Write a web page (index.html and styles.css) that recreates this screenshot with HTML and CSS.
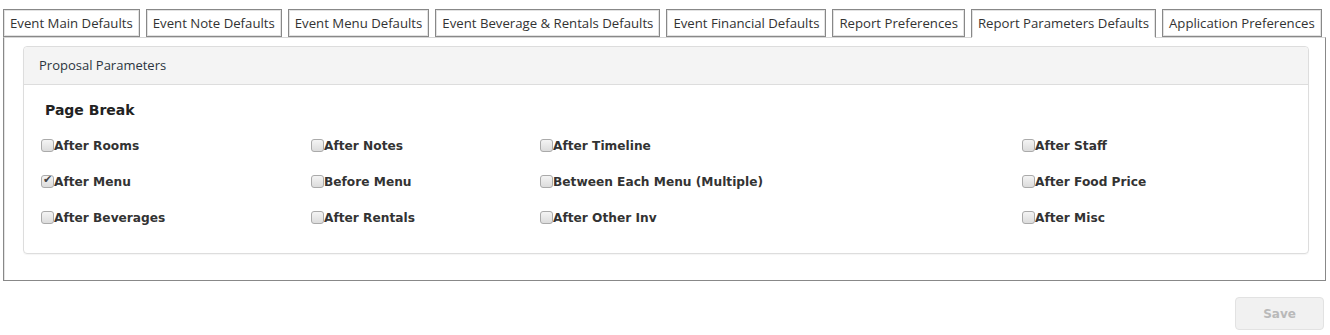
FILE: index.html
```html
<!DOCTYPE html>
<html lang="en">
<head>
    <meta charset="UTF-8">
    <title>Report Parameters Defaults</title>
    <link rel="stylesheet" href="styles.css">
</head>
<body>
    <div class="page">
        <ul class="tabs">
            <li class="tab">Event Main Defaults</li>
            <li class="tab">Event Note Defaults</li>
            <li class="tab">Event Menu Defaults</li>
            <li class="tab">Event Beverage &amp; Rentals Defaults</li>
            <li class="tab">Event Financial Defaults</li>
            <li class="tab">Report Preferences</li>
            <li class="tab active">Report Parameters Defaults</li>
            <li class="tab">Application Preferences</li>
        </ul>
        <div class="tab-panel">
            <div class="card">
                <div class="card-header">Proposal Parameters</div>
                <div class="card-body">
                    <h3 class="section-title">Page Break</h3>
                    <div class="options">
                        <label class="option"><input type="checkbox">After Rooms</label>
                        <label class="option"><input type="checkbox">After Notes</label>
                        <label class="option"><input type="checkbox">After Timeline</label>
                        <label class="option"><input type="checkbox">After Staff</label>

                        <label class="option"><input type="checkbox" checked>After Menu</label>
                        <label class="option"><input type="checkbox">Before Menu</label>
                        <label class="option"><input type="checkbox">Between Each Menu (Multiple)</label>
                        <label class="option"><input type="checkbox">After Food Price</label>

                        <label class="option"><input type="checkbox">After Beverages</label>
                        <label class="option"><input type="checkbox">After Rentals</label>
                        <label class="option"><input type="checkbox">After Other Inv</label>
                        <label class="option"><input type="checkbox">After Misc</label>
                    </div>
                </div>
            </div>
        </div>
        <div class="actions">
            <button class="btn save-btn" disabled>Save</button>
        </div>
    </div>
</body>
</html>
```

FILE: styles.css
```css
body {
    margin: 0;
    font-family: "Open Sans", sans-serif;
    color: #333;
    background: #fff;
}

.page {
    padding: 9px 4px 0 3px;
}

.tabs {
    list-style: none;
    margin: 0;
    padding: 0;
    display: flex;
    gap: 6px;
    position: relative;
    z-index: 1;
}

.tab {
    height: 26px;
    line-height: 26px;
    padding: 0 6px;
    font-size: 13.2px;
    color: #333;
    border: 1px solid #888;
    box-shadow: inset 1px 1px 0 #e2e2e2, inset -1px -1px 0 #e2e2e2;
    background: #fff;
    white-space: nowrap;
}

.tab.active {
    border-bottom-color: #fff;
    height: 27px;
    margin-bottom: -1px;
    box-shadow: inset 1px 1px 0 #e2e2e2, inset -1px 0 0 #e2e2e2;
}

.tab-panel {
    border: 1px solid #888;
    border-top-color: #d6d6d6;
    box-shadow: inset 1px 0 0 #e4e4e4;
    padding: 8px 16px 26px 19px;
}

.card {
    border: 1px solid #ddd;
    border-radius: 4px;
    box-shadow: 0 1px 1px rgba(0, 0, 0, 0.04);
}

.card-header {
    background: #f4f4f4;
    border-bottom: 1px solid #ddd;
    border-radius: 4px 4px 0 0;
    height: 37px;
    line-height: 37px;
    padding: 0 15px;
    font-size: 13px;
    color: #2b3440;
}

.card-body {
    padding: 13px 18px 8px 18px;
}

.section-title {
    margin: 0 0 15px 3px;
    font-family: "DejaVu Sans", Verdana, sans-serif;
    font-size: 14px;
    font-weight: bold;
    color: #222;
    height: 24px;
    line-height: 24px;
}

.options {
    display: grid;
    grid-template-columns: 270px 229px 482px auto;
    grid-auto-rows: 36px;
}

.option {
    display: flex;
    align-items: center;
    height: 18px;
    font-family: "DejaVu Sans", Verdana, sans-serif;
    font-size: 12.2px;
    font-weight: bold;
    color: #333;
    white-space: nowrap;
}

.option input {
    appearance: none;
    width: 13px;
    height: 13px;
    margin: -2px 0 0 -1px;
    border: 1px solid #aaa;
    border-radius: 3px;
    background: linear-gradient(#f4f4f4, #dcdcdc);
    position: relative;
    flex-shrink: 0;
}

.option input:checked::after {
    content: "\2714";
    position: absolute;
    left: 1px;
    top: -3px;
    font-size: 11px;
    color: #444;
}

.actions {
    display: flex;
    justify-content: flex-end;
    padding: 16px 2px 0 0;
}

.btn {
    width: 89px;
    height: 33px;
    border-radius: 4px;
    font-family: "DejaVu Sans", Verdana, sans-serif;
    font-size: 12px;
    font-weight: bold;
}

.save-btn {
    background: #f1f1f1;
    border: 1px solid #e2e2e2;
    color: #b9b9b9;
}
```
